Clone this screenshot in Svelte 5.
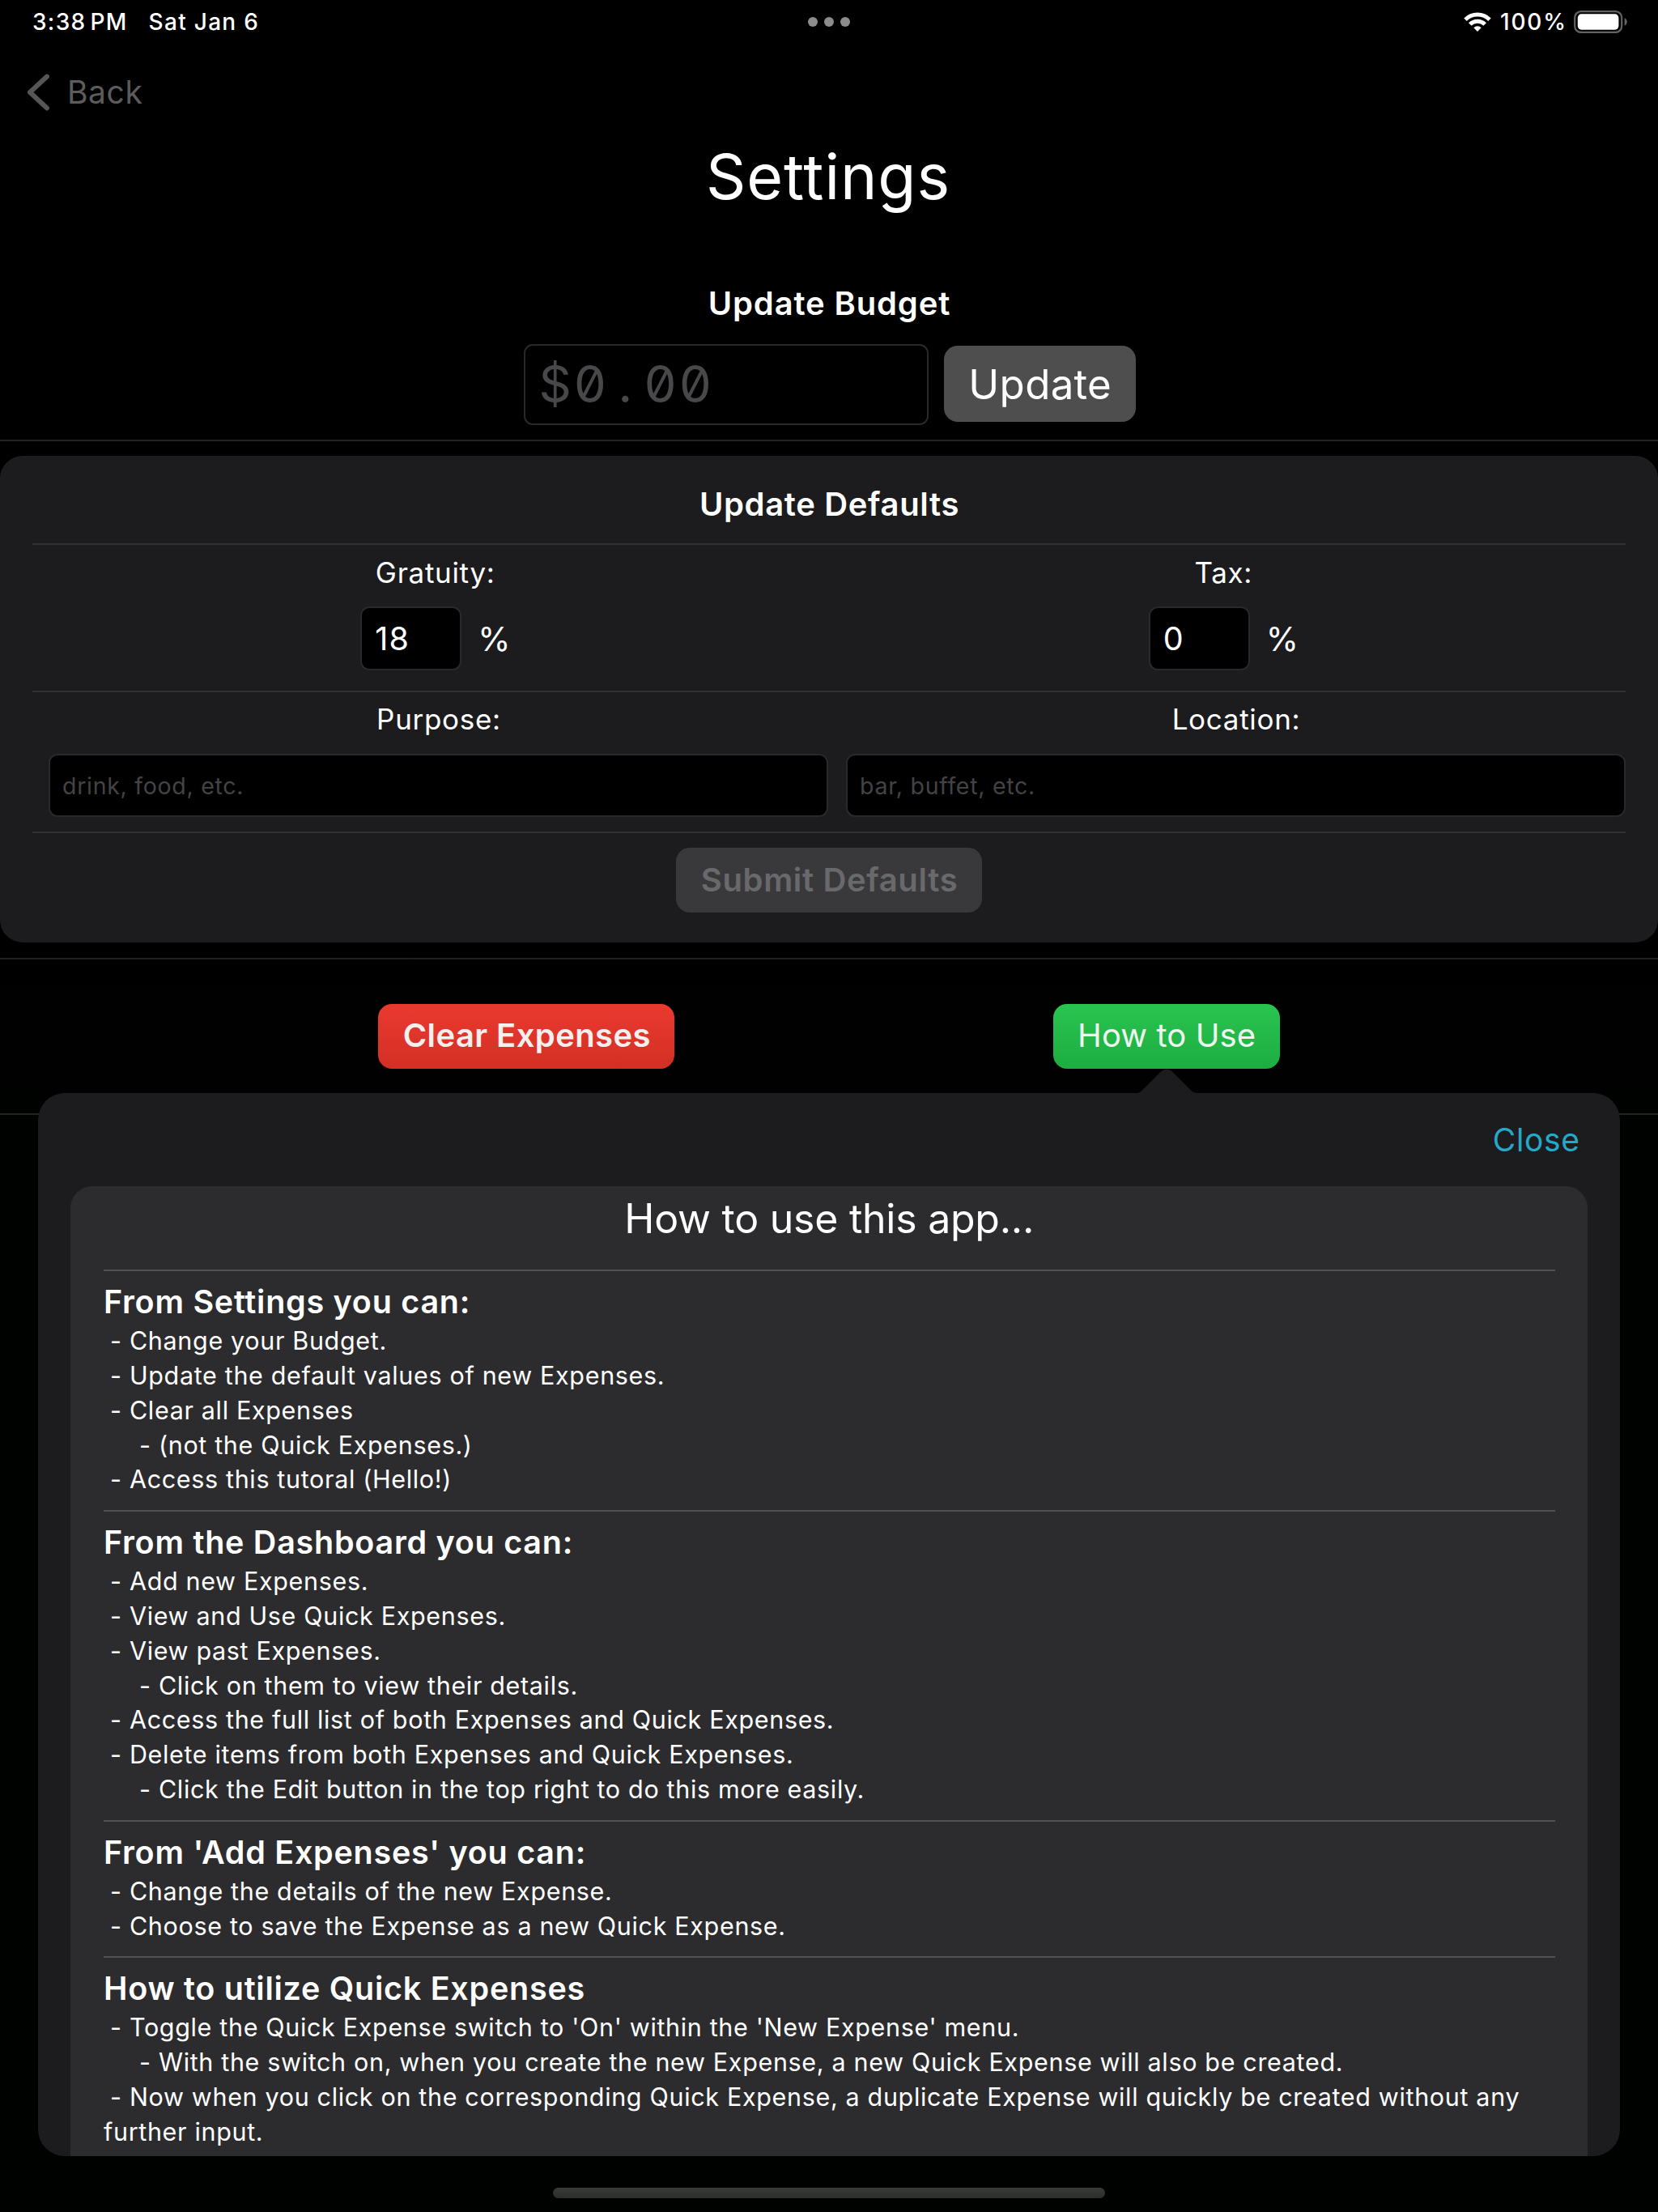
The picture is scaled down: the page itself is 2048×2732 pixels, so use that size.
<script>
  const budgetPlaceholder = [...'$0.00'];

  const sections = [
    {
      title: 'From Settings you can:',
      items: [
        { text: 'Change your Budget.' },
        { text: 'Update the default values of new Expenses.' },
        { text: 'Clear all Expenses' },
        { text: '(not the Quick Expenses.)', sub: true },
        { text: 'Access this tutoral (Hello!)' },
      ],
    },
    {
      title: 'From the Dashboard you can:',
      items: [
        { text: 'Add new Expenses.' },
        { text: 'View and Use Quick Expenses.' },
        { text: 'View past Expenses.' },
        { text: 'Click on them to view their details.', sub: true },
        { text: 'Access the full list of both Expenses and Quick Expenses.' },
        { text: 'Delete items from both Expenses and Quick Expenses.' },
        { text: 'Click the Edit button in the top right to do this more easily.', sub: true },
      ],
    },
    {
      title: "From 'Add Expenses' you can:",
      items: [
        { text: 'Change the details of the new Expense.' },
        { text: 'Choose to save the Expense as a new Quick Expense.' },
      ],
    },
    {
      title: 'How to utilize Quick Expenses',
      items: [
        { text: "Toggle the Quick Expense switch to 'On' within the 'New Expense' menu." },
        { text: 'With the switch on, when you create the new Expense, a new Quick Expense will also be created.', sub: true },
        { text: 'Now when you click on the corresponding Quick Expense, a duplicate Expense will quickly be created without any further input.' },
      ],
    },
  ];
</script>

<div class="screen">
  <header class="status">
    <div class="clock">
      <span class="time">3:38</span><span class="meridiem">PM</span><span class="date">Sat Jan 6</span>
    </div>
    <div class="dots"><i></i><i></i><i></i></div>
    <div class="indicators">
      <svg class="wifi" viewBox="0 0 36 25" width="36" height="25">
        <g fill="none" stroke="#fff" stroke-width="5">
          <path d="M3 9.2a21.2 21.2 0 0 1 30 0" />
          <path d="M8.800 15a13 13 0 0 1 18.400 0" />
        </g>
        <path d="M18 24l-4.700-4.700a6.600 6.600 0 0 1 9.400 0z" fill="#fff" />
      </svg>
      <span class="percent">100%</span>
      <svg class="battery" viewBox="0 0 67 28" width="67" height="28">
        <rect x="1.2" y="1.2" width="58" height="25.6" rx="7.5" fill="none" stroke="#636363" stroke-width="2.2" />
        <rect x="4.8" y="4.3" width="50.6" height="19.4" rx="4.6" fill="#fff" />
        <path d="M62.600 9.200c4.200 1.600 4.200 8 0 9.600z" fill="#636363" />
      </svg>
    </div>
  </header>

  <nav>
    <svg viewBox="0 0 30 46" width="30" height="46">
      <path d="M25 3.500L4 23l21 19.500" fill="none" stroke="#565656" stroke-width="5.8" stroke-linecap="round" stroke-linejoin="round" />
    </svg>
    <span>Back</span>
  </nav>

  <h1>Settings</h1>

  <h2 class="budget-title">Update Budget</h2>
  <div class="budget">
    <div class="field amount">
      {#each budgetPlaceholder as ch}<span>{ch}</span>{/each}
    </div>
    <div class="button update">Update</div>
  </div>

  <div class="rule after-budget"></div>

  <section class="card">
    <h2>Update Defaults</h2>
    <div class="line"></div>
    <div class="rates">
      <div class="column">
        <div class="label">Gratuity:</div>
        <div class="rate"><div class="field">18</div><span>%</span></div>
      </div>
      <div class="column">
        <div class="label">Tax:</div>
        <div class="rate"><div class="field">0</div><span>%</span></div>
      </div>
    </div>
    <div class="line"></div>
    <div class="texts">
      <div class="column">
        <div class="label">Purpose:</div>
        <div class="field">drink, food, etc.</div>
      </div>
      <div class="column">
        <div class="label">Location:</div>
        <div class="field">bar, buffet, etc.</div>
      </div>
    </div>
    <div class="line"></div>
    <div class="button submit">Submit Defaults</div>
  </section>

  <div class="rule after-card"></div>
  <div class="actions">
    <div class="button clear">Clear Expenses</div>
    <div class="button howto">How to Use</div>
  </div>
  <div class="rule"></div>

  <aside class="popover">
    <svg class="arrow" viewBox="0 0 84 32" width="84" height="32">
      <path d="M0 32V30.500C7 30.500 10 29 14 24.500L34.500 4C39 -.2 45 -.2 49.500 4L70 24.500C74 29 77 30.500 84 30.500V32z" fill="#1c1c1e" />
    </svg>
    <div class="sheet">
      <div class="close">Close</div>
      <div class="panel">
        <h3>How to use this app...</h3>
        {#each sections as section}
          <section class="topic">
            <h4>{section.title}</h4>
            {#each section.items as item}
              <p class:sub={item.sub}>- {item.text}</p>
            {/each}
          </section>
        {/each}
      </div>
    </div>
  </aside>

  <div class="home"></div>
</div>

<style>
  :global(body) {
    background: #000;
  }
  .screen {
    position: relative;
    width: 2048px;
    height: 2732px;
    overflow: hidden;
    display: flex;
    flex-direction: column;
    background: linear-gradient(#000 42%, #000200 52%);
    color: #fff;
    font-family: Inter, 'Liberation Sans', sans-serif;
    box-sizing: border-box;
  }
  .screen * {
    box-sizing: border-box;
  }
  h1, h2, h3, h4, p {
    margin: 0;
  }

  .status {
    display: grid;
    grid-template-columns: 1fr auto 1fr;
    align-items: center;
    height: 54px;
    padding: 0 37px 0 40px;
    font-size: 28px;
    line-height: 54px;
  }
  .clock {
    display: flex;
    font-weight: 500;
    letter-spacing: 1.3px;
  }
  .meridiem {
    margin-left: 5px;
  }
  .date {
    margin-left: 26px;
  }
  .dots {
    display: flex;
    gap: 8px;
    padding-right: 3px;
  }
  .dots i {
    width: 12px;
    height: 12px;
    border-radius: 50%;
    background: #8c8c8c;
  }
  .indicators {
    display: flex;
    justify-content: flex-end;
    align-items: center;
  }
  .percent {
    width: 82px;
    margin: 0 9px 0 10px;
    font-weight: 500;
    letter-spacing: 1.8px;
  }

  nav {
    display: flex;
    align-items: center;
    height: 119px;
    padding-left: 33px;
    gap: 20px;
    color: #5c5c5c;
    font-size: 39px;
    letter-spacing: 0.600px;
  }
  h1 {
    font-size: 77px;
    line-height: 91px;
    font-weight: 400;
    letter-spacing: 0.900px;
    text-align: center;
    padding-right: 2px;
  }
  h2 {
    font-size: 40px;
    line-height: 96px;
    font-weight: 600;
    letter-spacing: 0.650px;
    text-align: center;
    padding-left: 1px;
  }
  .budget-title {
    margin-top: 61px;
    line-height: 100px;
    letter-spacing: 0.850px;
    padding-left: 1px;
  }
  .budget {
    display: flex;
    justify-content: center;
    align-items: flex-start;
    gap: 19.500px;
    padding-left: 1.500px;
  }
  .field {
    display: flex;
    align-items: center;
    background: #000;
    border: 2px solid #29292b;
    border-radius: 11px;
  }
  .amount {
    width: 499.500px;
    height: 100px;
    padding: 0 0 2px 15px;
    color: #48484a;
    font-size: 63px;
    font-weight: 400;
    font-feature-settings: 'zero';
  }
  .amount span {
    width: 43.300px;
    text-align: center;
  }
  .button {
    display: flex;
    align-items: center;
    justify-content: center;
    height: 80px;
    border-radius: 17px;
    font-size: 40px;
    letter-spacing: 0.400px;
  }
  .update {
    width: 236.500px;
    height: 94px;
    margin-top: 2px;
    padding-left: 1px;
    background: #4e4e4e;
    font-size: 51px;
    letter-spacing: 0.300px;
  }

  .rule {
    flex: none;
    height: 2px;
    background: #232324;
  }
  .after-budget {
    margin: 18px 0;
  }
  .after-card {
    margin-top: 19px;
    background: #1e1e1f;
  }

  .card {
    height: 601px;
    padding-top: 12px;
    border-radius: 28px;
    background: #1c1c1e;
  }
  .line {
    height: 2px;
    margin: 0 40px;
    background: #323235;
  }
  .rates,
  .texts {
    display: grid;
    grid-template-columns: 1fr 1fr;
  }
  .rates {
    height: 180px;
    padding: 0 50px 0 51px;
  }
  .texts {
    height: 172px;
    column-gap: 22px;
    padding: 0 40px 0 60px;
  }
  .label {
    font-size: 35px;
    line-height: 69px;
    letter-spacing: 0.700px;
    text-align: center;
  }
  .rate {
    display: flex;
    align-items: center;
    justify-content: center;
    gap: 20px;
    margin-top: 7px;
    font-size: 39.500px;
  }
  .rate .field {
    width: 125px;
    height: 79px;
    padding-left: 16px;
    letter-spacing: 1.200px;
  }
  .rate span {
    width: 40px;
    font-size: 41px;
  }
  .texts .label {
    line-height: 67px;
    padding-left: 1px;
  }
  .texts .field {
    height: 78px;
    margin-top: 9px;
    padding: 1px 0 0 15px;
    color: #434345;
    font-size: 28.500px;
    letter-spacing: 0.720px;
  }
  .submit {
    width: 378px;
    margin: 18px auto 0;
    padding: 0 0 1px 1px;
    background: #39393c;
    color: #69696c;
    font-weight: 600;
    letter-spacing: 0.650px;
  }

  .actions {
    display: flex;
    justify-content: space-evenly;
    padding-top: 55px;
    height: 190px;
  }
  .actions .button {
    padding: 0 0 3px 1px;
  }
  .clear {
    width: 366px;
    background: linear-gradient(#ea3a30, #d32f24);
    color: #f6efee;
    font-weight: 600;
  }
  .howto {
    width: 280px;
    background: linear-gradient(#29c450, #1dad41);
    color: #eef6f0;
    letter-spacing: 0.100px;
  }

  .popover {
    position: absolute;
    left: 47px;
    top: 1350px;
    width: 1953.500px;
    height: 1313px;
  }
  .arrow {
    position: absolute;
    left: 1352px;
    top: -30px;
  }
  .sheet {
    height: 100%;
    padding: 0 40px;
    border-radius: 33px;
    background: #1c1c1e;
    overflow: hidden;
  }
  .close {
    padding-right: 9px;
    color: #26a9c9;
    font-size: 39px;
    line-height: 115px;
    letter-spacing: 0.600px;
    text-align: right;
  }
  .panel {
    height: 1200px;
    padding: 0 40px 0 41px;
    border-radius: 27px 27px 0 0;
    background: #2c2c2e;
  }
  h3 {
    margin-bottom: 23px;
    font-size: 50px;
    line-height: 80px;
    font-weight: 400;
    letter-spacing: -0.250px;
    text-align: center;
  }
  .topic {
    padding: 12px 0 15.800px;
    border-top: 2px solid #525254;
  }
  h4 {
    font-size: 39.500px;
    line-height: 53px;
    font-weight: 600;
    letter-spacing: 0.740px;
  }
  p {
    font-size: 30.500px;
    line-height: 42.850px;
    letter-spacing: 0.660px;
    text-indent: 8px;
  }
  p.sub {
    text-indent: 44px;
  }

  .home {
    position: absolute;
    left: 683px;
    top: 2702px;
    width: 682px;
    height: 13px;
    border-radius: 7px;
    background: linear-gradient(#3a3a3a, #2d2d2d);
  }
</style>
